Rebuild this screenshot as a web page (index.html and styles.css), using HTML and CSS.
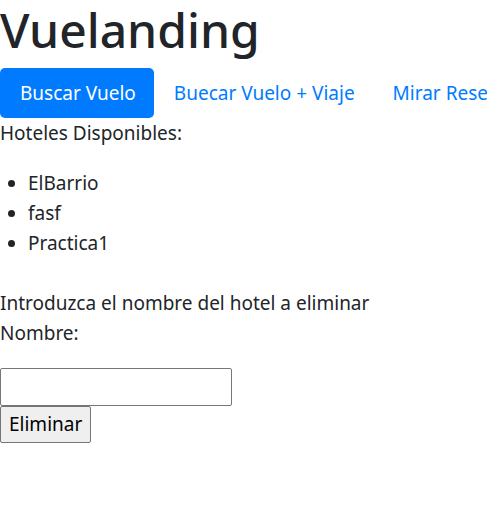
FILE: index.html
```html
<!DOCTYPE html>
<html lang="es">
<head>
<meta charset="utf-8">
<title>Vuelanding</title>
<link rel="stylesheet" href="styles.css">
</head>
<body>
<h1 class="title">Vuelanding</h1>
<div class="nav-wrap">
  <ul class="nav">
    <li class="nav-item"><a class="nav-link active" href="#">Buscar Vuelo</a></li>
    <li class="nav-item"><a class="nav-link" href="#">Buecar Vuelo + Viaje</a></li>
    <li class="nav-item"><a class="nav-link" href="#">Mirar Reservas</a></li>
  </ul>
</div>
<p class="text">Hoteles Disponibles:</p>
<ul class="list">
  <li>ElBarrio</li>
  <li>fasf</li>
  <li>Practica1</li>
</ul>
<form class="form">
  <div class="line">Introduzca el nombre del hotel a eliminar</div>
  <p class="text">Nombre:</p>
  <input class="field" type="text">
  <button class="btn" type="button">Eliminar</button>
</form>
</body>
</html>
```
FILE: styles.css
```css
body {
  margin: 0;
  font-family: "Noto Sans", "Open Sans", sans-serif;
  font-size: 19px;
  line-height: 30px;
  color: #212529;
  background: #fff;
  overflow-x: hidden;
}
.title {
  margin: 0 0 8px 0;
  font-size: 48px;
  font-weight: 500;
  line-height: 60px;
}
.nav-wrap {
  overflow: hidden;
}
.nav {
  display: flex;
  flex-wrap: nowrap;
  list-style: none;
  margin: 0;
  padding: 0;
  white-space: nowrap;
}
.nav-item {
  flex: none;
}
.nav-link {
  display: block;
  padding: 10px 18px 10px 20px;
  color: #007bff;
  text-decoration: none;
  border-radius: 5px;
}
.nav-link.active {
  background: #007bff;
  color: #fff;
}
.text {
  margin: 0 0 20px 0;
}
.list {
  margin: 0 0 30px 0;
  padding-left: 28px;
}
.form {
  margin: 0;
}
.line {
  margin: 0;
}
.field {
  display: block;
  box-sizing: border-box;
  width: 232px;
  height: 38px;
  margin: 0;
  border: 1px solid #767676;
  border-radius: 2px;
  font: inherit;
  padding: 1px 3px;
}
.btn {
  display: block;
  box-sizing: border-box;
  height: 37px;
  margin: 0;
  padding: 0 8px;
  font: inherit;
  line-height: 1;
  color: #000;
  background: #efefef;
  border: 1px solid #767676;
  border-radius: 2px;
}
```
